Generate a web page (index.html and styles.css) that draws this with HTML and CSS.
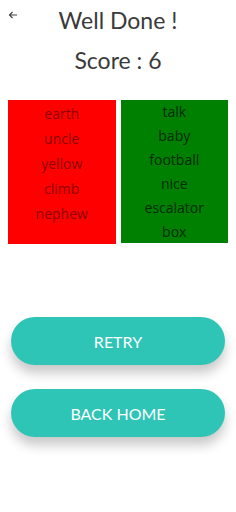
FILE: index.html
```html
<!DOCTYPE html>
<html lang="en">
<head>
    <meta charset="UTF-8">
    <meta name="viewport" content="width=device-width, initial-scale=1.0">
    <title>Result</title>
    <link rel="stylesheet" href="styles.css">
</head>
<body>
    <div class="screen">
        <div class="header">
            <span class="back">
                <svg width="10" height="8" viewBox="0 0 10 8">
                    <path d="M9 4H1.5M4.5 1L1.5 4L4.5 7" fill="none" stroke="#444" stroke-width="1.2"/>
                </svg>
            </span>
            <h1 class="title">Well Done !</h1>
            <span></span>
        </div>
        <div class="score">Score : 6</div>

        <div class="lists">
            <div class="list wrong">
                <div class="word">earth</div>
                <div class="word">uncle</div>
                <div class="word">yellow</div>
                <div class="word">climb</div>
                <div class="word">nephew</div>
            </div>
            <div class="list right">
                <div class="word">talk</div>
                <div class="word">baby</div>
                <div class="word">football</div>
                <div class="word">nice</div>
                <div class="word">escalator</div>
                <div class="word">box</div>
            </div>
        </div>

        <div class="actions">
            <button class="btn">RETRY</button>
            <button class="btn">BACK HOME</button>
        </div>
    </div>
</body>
</html>
```

FILE: styles.css
```css
/* result screen */
body {
    margin: 0;
    background-color: #fff;
    font-family: "Open Sans", sans-serif;
}

.screen {
    width: 236px;
    height: 512px;
    overflow: hidden;
}

.header {
    display: grid;
    grid-template-columns: 40px 1fr 40px;
    align-items: center;
    padding-top: 6px;
}

.back {
    display: flex;
    padding-left: 8px;
    align-self: start;
    padding-top: 5px;
}

.title {
    margin: 0;
    text-align: center;
    font-family: Lato, sans-serif;
    font-weight: 400;
    font-size: 23px;
    line-height: 28px;
    color: #3a3a3a;
}

.score {
    margin-top: 12px;
    text-align: center;
    font-family: Lato, sans-serif;
    font-weight: 400;
    font-size: 23px;
    line-height: 28px;
    color: #3a3a3a;
}

.lists {
    display: flex;
    gap: 5px;
    margin: 26px 8px 0 8px;
}

.list {
    flex: 1;
    height: 143px;
    text-align: center;
    font-size: 14px;
}

.wrong {
    background-color: #ff0000;
    color: #8c0000;
    padding-top: 1px;
}

.wrong .word {
    line-height: 25px;
}

.right {
    background-color: #008000;
    color: #002a00;
}

.right .word {
    line-height: 24px;
}

.actions {
    display: flex;
    flex-direction: column;
    gap: 24px;
    margin: 73px 11px 0 11px;
}

.btn {
    height: 48px;
    border: none;
    border-radius: 24px;
    background-color: #2ec4b6;
    color: #fff;
    font-family: Lato, sans-serif;
    font-size: 16px;
    box-shadow: 0 8px 12px rgba(0, 0, 0, 0.22);
}
```
